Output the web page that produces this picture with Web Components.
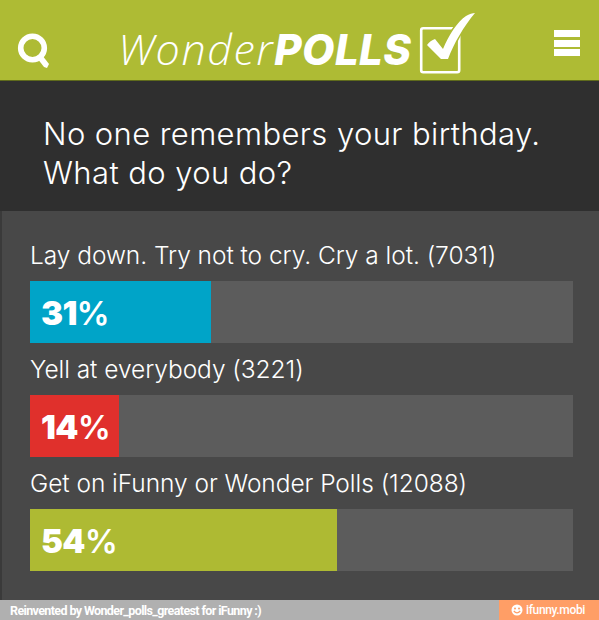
<!DOCTYPE html>
<html>
<head>
<meta charset="utf-8">
<title>WonderPolls</title>
<style>
  html, body { margin: 0; padding: 0; background: #484848; }
  body { width: 599px; height: 620px; overflow: hidden; font-family: Inter, Lato, sans-serif; }
</style>
</head>
<body>
<wp-header></wp-header>
<wp-question>No one remembers your birthday.<br>What do you do?</wp-question>
<wp-results>
  <wp-option votes="7031" percent="31" width="181" color="#00a4c8">Lay down. Try not to cry. Cry a lot.</wp-option>
  <wp-option votes="3221" percent="14" width="89" color="#e0302c">Yell at everybody</wp-option>
  <wp-option votes="12088" percent="54" width="307" color="#aeba33">Get on iFunny or Wonder Polls</wp-option>
</wp-results>
<wp-footer></wp-footer>

<script>
const headerTemplate = document.createElement("template");
headerTemplate.innerHTML = `
  <style>
    :host {
      display: flex;
      align-items: flex-start;
      height: 80px;
      padding: 0 19px 0 17px;
      background: #aebb34;
      border-bottom: 1px solid #5f6b1c;
      color: #fff;
    }
    .search { width: 34px; height: 38px; margin-top: 31px; flex: none; }
    .logo {
      display: flex;
      align-items: flex-start;
      margin: 12px 0 0 67px;
      font-style: italic;
      line-height: 62px;
      white-space: nowrap;
    }
    .words { margin-top: 6px; }
    .thin { font-family: "Open Sans", sans-serif; font-weight: 300; font-size: 43px; letter-spacing: 1.6px; }
    b { font-family: Inter, sans-serif; font-weight: 800; font-size: 42px; letter-spacing: 0.4px; }
    .check { width: 58px; height: 62px; margin-left: 8px; flex: none; }
    .menu {
      margin: 30px 0 0 auto;
      width: 26px;
      display: flex;
      flex-direction: column;
      gap: 2.5px;
    }
    .menu i { display: block; height: 7px; background: #fff; }
  </style>
  <svg class="search" viewBox="0 0 34 38">
    <circle cx="15.5" cy="17" r="11.8" fill="none" stroke="#fff" stroke-width="5.6"/>
    <path d="M20 27 L25 24 L32 33 L30 37 L27 36 Z" fill="#fff"/>
  </svg>
  <div class="logo">
    <span class="words"><span class="thin">Wonder</span><b>POLLS</b></span>
    <svg class="check" viewBox="0 0 58 62">
      <rect x="2.2" y="16.2" width="38" height="44" rx="2" fill="none" stroke="#fff" stroke-width="2.6"/>
      <path d="M8 33 C10 30 13 28 16 27 L24 37 C30 23 38 10 47 4 C50 2 54 1 56 1 C45 14 35 31 29 47 L22 47 Z" fill="#fff" stroke="#aebb34" stroke-width="3" paint-order="stroke"/>
    </svg>
  </div>
  <div class="menu"><i></i><i></i><i></i></div>
`;

class WpHeader extends HTMLElement {
  constructor() {
    super();
    this.attachShadow({ mode: "open" });
    this.shadowRoot.appendChild(headerTemplate.content.cloneNode(true));
  }
}
customElements.define("wp-header", WpHeader);

const questionTemplate = document.createElement("template");
questionTemplate.innerHTML = `
  <style>
    :host {
      display: block;
      box-sizing: border-box;
      height: 130px;
      padding: 33px 20px 0 43px;
      background: #2f2f2f;
      color: #fff;
      font-size: 31px;
      font-weight: 300;
      line-height: 39px;
      letter-spacing: 0.4px;
    }
  </style>
  <slot></slot>
`;

class WpQuestion extends HTMLElement {
  constructor() {
    super();
    this.attachShadow({ mode: "open" });
    this.shadowRoot.appendChild(questionTemplate.content.cloneNode(true));
  }
}
customElements.define("wp-question", WpQuestion);

const resultsTemplate = document.createElement("template");
resultsTemplate.innerHTML = `
  <style>
    :host {
      display: block;
      box-sizing: border-box;
      height: 389px;
      padding: 18px 26px 0 28px;
      margin-left: 2px;
      background: #484848;
      box-shadow: -2px 0 0 #3a3a3a;
    }
  </style>
  <slot></slot>
`;

class WpResults extends HTMLElement {
  constructor() {
    super();
    this.attachShadow({ mode: "open" });
    this.shadowRoot.appendChild(resultsTemplate.content.cloneNode(true));
  }
}
customElements.define("wp-results", WpResults);

const optionTemplate = document.createElement("template");
optionTemplate.innerHTML = `
  <style>
    :host { display: block; color: #fff; }
    .label {
      height: 52px;
      line-height: 52px;
      font-size: 24.5px;
      font-weight: 300;
      letter-spacing: -0.05px;
      white-space: nowrap;
    }
    .track { height: 62px; background: #5c5c5c; }
    .fill {
      box-sizing: border-box;
      height: 100%;
      padding-left: 11px;
      font-size: 33px;
      font-weight: 900;
      letter-spacing: -0.7px;
      line-height: 65px;
    }
    .sign { font-weight: 600; }
  </style>
  <div class="label"><slot></slot> <span id="votes"></span></div>
  <div class="track"><div class="fill"><span id="pct"></span><span class="sign">%</span></div></div>
`;

class WpOption extends HTMLElement {
  constructor() {
    super();
    this.attachShadow({ mode: "open" });
    this.shadowRoot.appendChild(optionTemplate.content.cloneNode(true));
  }

  connectedCallback() {
    this.shadowRoot.querySelector("#votes").textContent = `(${this.getAttribute("votes")})`;
    this.shadowRoot.querySelector("#pct").textContent = this.getAttribute("percent");
    const fill = this.shadowRoot.querySelector(".fill");
    fill.style.width = `${this.getAttribute("width")}px`;
    fill.style.background = this.getAttribute("color");
  }
}
customElements.define("wp-option", WpOption);

const footerTemplate = document.createElement("template");
footerTemplate.innerHTML = `
  <style>
    :host {
      display: flex;
      height: 20px;
      background: #b0b0b0;
      color: #fff;
      font-family: Roboto, sans-serif;
      font-size: 12.5px;
      font-weight: 700;
      line-height: 21px;
      white-space: nowrap;
    }
    .credit { flex: 1; padding-left: 10px; letter-spacing: -0.62px; }
    .brand {
      width: 100px;
      display: flex;
      align-items: center;
      gap: 3px;
      padding-left: 12px;
      box-sizing: border-box;
      background: #ff9e66;
      font-size: 12px;
      font-weight: 500;
      letter-spacing: -0.35px;
    }
    svg { width: 12px; height: 12px; flex: none; }
  </style>
  <div class="credit">Reinvented by Wonder_polls_greatest for iFunny :)</div>
  <div class="brand">
    <svg viewBox="0 0 12 12">
      <circle cx="6" cy="6" r="5.5" fill="#fff"/>
      <circle cx="4" cy="4.5" r="1" fill="#ff9e66"/>
      <circle cx="8" cy="4.5" r="1" fill="#ff9e66"/>
      <path d="M2.8 7 Q6 10.6 9.2 7" fill="none" stroke="#ff9e66" stroke-width="1.2"/>
    </svg>
    <span>ifunny.mobi</span>
  </div>
`;

class WpFooter extends HTMLElement {
  constructor() {
    super();
    this.attachShadow({ mode: "open" });
    this.shadowRoot.appendChild(footerTemplate.content.cloneNode(true));
  }
}
customElements.define("wp-footer", WpFooter);
</script>
</body>
</html>
